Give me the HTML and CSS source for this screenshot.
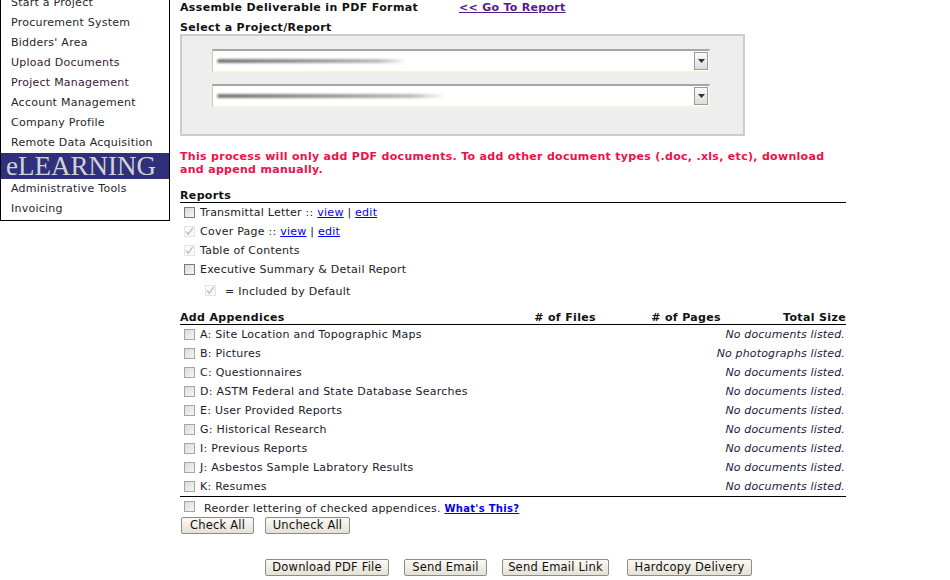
FILE: index.html
```html
<!DOCTYPE html>
<html>
<head>
<meta charset="utf-8">
<link rel="stylesheet" href="styles.css">
</head>
<body>
<div class="page">
  <nav class="sidebar">
    <a class="nav-item">Start a Project</a>
    <a class="nav-item">Procurement System</a>
    <a class="nav-item">Bidders' Area</a>
    <a class="nav-item visited">Upload Documents</a>
    <a class="nav-item visited">Project Management</a>
    <a class="nav-item">Account Management</a>
    <a class="nav-item">Company Profile</a>
    <a class="nav-item">Remote Data Acquisition</a>
    <div class="banner">eLEARNING</div>
    <a class="nav-item">Administrative Tools</a>
    <a class="nav-item">Invoicing</a>
  </nav>

  <main class="main">
    <div class="title-row">
      <div class="title">Assemble Deliverable in PDF Format</div>
      <a class="go-link">&lt;&lt; Go To Report</a>
    </div>
    <div class="label">Select a Project/Report</div>
    <div class="select-box">
      <div class="select"><span class="blur b1"></span><span class="arrow"><svg width="7" height="4" viewBox="0 0 7 4"><path d="M0 0H7L3.5 4Z" fill="#333"/></svg></span></div>
      <div class="select"><span class="blur b2"></span><span class="arrow"><svg width="7" height="4" viewBox="0 0 7 4"><path d="M0 0H7L3.5 4Z" fill="#333"/></svg></span></div>
    </div>

    <p class="warning">This process will only add PDF documents. To add other document types (.doc, .xls, etc), download and append manually.</p>

    <div class="section-head">Reports</div>
    <div class="row"><span class="cb"></span>Transmittal Letter ::&nbsp;<a class="lnk">view</a>&nbsp;|&nbsp;<a class="lnk">edit</a></div>
    <div class="row"><span class="cb checked"><svg width="11" height="11" viewBox="0 0 11 11"><path d="M1.5 5.5L4 9L9.5 1" fill="none" stroke="#bdbdb5" stroke-width="1.6"/></svg></span>Cover Page ::&nbsp;<a class="lnk">view</a>&nbsp;|&nbsp;<a class="lnk">edit</a></div>
    <div class="row"><span class="cb checked"><svg width="11" height="11" viewBox="0 0 11 11"><path d="M1.5 5.5L4 9L9.5 1" fill="none" stroke="#bdbdb5" stroke-width="1.6"/></svg></span>Table of Contents</div>
    <div class="row"><span class="cb"></span>Executive Summary &amp; Detail Report</div>
    <div class="row legend"><span class="cb checked"><svg width="11" height="11" viewBox="0 0 11 11"><path d="M1.5 5.5L4 9L9.5 1" fill="none" stroke="#bdbdb5" stroke-width="1.6"/></svg></span>= Included by Default</div>

    <div class="app-head">
      <div>Add Appendices</div>
      <div class="r"># of Files</div>
      <div class="r"># of Pages</div>
      <div class="r">Total Size</div>
    </div>
    <div class="apps">
      <div class="app"><div class="name"><span class="cb light"></span>A: Site Location and Topographic Maps</div><div class="status">No documents listed.</div></div>
      <div class="app"><div class="name"><span class="cb light"></span>B: Pictures</div><div class="status">No photographs listed.</div></div>
      <div class="app"><div class="name"><span class="cb light"></span>C: Questionnaires</div><div class="status">No documents listed.</div></div>
      <div class="app"><div class="name"><span class="cb light"></span>D: ASTM Federal and State Database Searches</div><div class="status">No documents listed.</div></div>
      <div class="app"><div class="name"><span class="cb light"></span>E: User Provided Reports</div><div class="status">No documents listed.</div></div>
      <div class="app"><div class="name"><span class="cb light"></span>G: Historical Research</div><div class="status">No documents listed.</div></div>
      <div class="app"><div class="name"><span class="cb light"></span>I: Previous Reports</div><div class="status">No documents listed.</div></div>
      <div class="app"><div class="name"><span class="cb light"></span>J: Asbestos Sample Labratory Results</div><div class="status">No documents listed.</div></div>
      <div class="app"><div class="name"><span class="cb light"></span>K: Resumes</div><div class="status">No documents listed.</div></div>
    </div>

    <div class="reorder"><span class="cb light"></span>Reorder lettering of checked appendices.&nbsp;<a class="whats">What's This?</a></div>
    <div class="btn-row">
      <button class="btn w-check">Check All</button>
      <button class="btn w-uncheck">Uncheck All</button>
    </div>

    <div class="actions">
      <button class="btn w-download">Download PDF File</button>
      <button class="btn w-email">Send Email</button>
      <button class="btn w-link">Send Email Link</button>
      <button class="btn w-hard">Hardcopy Delivery</button>
    </div>
  </main>
</div>
</body>
</html>
```

FILE: styles.css
```css
html, body {
  margin: 0;
  padding: 0;
  background: #ffffff;
}
body {
  font-family: "DejaVu Sans", Verdana, sans-serif;
  font-size: 11px;
  letter-spacing: 0.25px;
  color: #222222;
}
.page {
  display: flex;
  align-items: flex-start;
}
.sidebar {
  width: 170px;
  box-sizing: border-box;
  margin-top: -7px;
  border-left: 1px solid #000;
  border-right: 1px solid #000;
  border-bottom: 1px solid #000;
  display: flex;
  flex-direction: column;
  padding-bottom: 1px;
}
.nav-item {
  display: block;
  height: 20px;
  line-height: 20px;
  padding-left: 10px;
  color: #1f1f2a;
  text-decoration: none;
  white-space: nowrap;
}
.nav-item.visited {
  color: #3a1838;
}
.banner {
  height: 26px;
  background: #2f2f7c;
  color: #d2d2d2;
  font-family: "Liberation Serif", "Times New Roman", serif;
  font-size: 27px;
  line-height: 26px;
  padding-left: 5px;
  letter-spacing: 0;
  white-space: nowrap;
}
.main {
  margin-left: 10px;
  width: 666px;
  display: flex;
  flex-direction: column;
}
.title-row {
  display: flex;
  padding-top: 1px;
  height: 14px;
  line-height: 14px;
}
.title {
  width: 279px;
  font-weight: bold;
  letter-spacing: 0.35px;
  color: #111;
}
.go-link {
  font-weight: bold;
  letter-spacing: 0.3px;
  color: #551a8b;
  text-decoration: underline;
}
.label {
  font-weight: bold;
  letter-spacing: 0.35px;
  color: #111;
  margin-top: 6px;
  line-height: 13px;
}
.select-box {
  width: 565px;
  box-sizing: border-box;
  background: #eeeeee;
  border: 2px solid #cccccc;
  padding: 13px 0 26px 30px;
  display: flex;
  flex-direction: column;
  gap: 11px;
}
.select {
  width: 498px;
  height: 24px;
  box-sizing: border-box;
  background: #ffffff;
  border-top: 2px solid #a8a59c;
  border-left: 1px solid #cbc8bd;
  border-right: 1px solid #f3f1df;
  border-bottom: 2px solid #f5f3e2;
  display: flex;
  align-items: center;
  justify-content: space-between;
  padding: 0 0 0 2px;
}
.blur {
  display: block;
  height: 4px;
  background: linear-gradient(90deg, #777 0%, #999 50%, #bbb 85%, rgba(255,255,255,0) 100%);
  filter: blur(1.2px);
  border-radius: 2px;
  margin-left: 2px;
}
.b1 { width: 190px; }
.b2 { width: 228px; }
.arrow {
  width: 14px;
  height: 18px;
  box-sizing: border-box;
  border: 1px solid #9a9a9a;
  background: linear-gradient(#fafafa, #dcdcdc);
  display: flex;
  align-items: center;
  justify-content: center;
  margin-right: 1px;
  margin-top: -1px;
}
.warning {
  margin: 14px 0 0 0;
  font-weight: bold;
  letter-spacing: 0.3px;
  color: #ee1148;
  line-height: 13px;
  width: 648px;
}
.section-head {
  margin-top: 13px;
  font-weight: bold;
  letter-spacing: 0.35px;
  color: #111;
  line-height: 13px;
  border-bottom: 1px solid #000;
}
.row {
  height: 19px;
  display: flex;
  align-items: center;
  padding-left: 4px;
  white-space: nowrap;
}
.row.legend {
  padding-left: 25px;
  height: 21px;
  padding-top: 2px;
}
.row.legend .cb {
  margin-right: 9px;
  margin-top: -3px;
}
.cb {
  display: inline-flex;
  align-items: center;
  justify-content: center;
  width: 11px;
  height: 11px;
  box-sizing: border-box;
  border: 1px solid #7a7a7a;
  background: linear-gradient(135deg, #d8d8d8, #f8f8f8);
  margin-right: 5px;
  flex: none;
}
.cb.light {
  border: 1px solid #a6a6a6;
  background: linear-gradient(135deg, #dcdcdc, #f4f4f4);
}
.cb.checked {
  border: 1px solid #e6e6e0;
  background: #fafafa;
}
.cb svg {
  display: block;
}
.lnk {
  color: #0000ee;
  text-decoration: underline;
}
.app-head {
  margin-top: 9px;
  display: grid;
  grid-template-columns: 296px 120px 125px 125px;
  font-weight: bold;
  letter-spacing: 0.35px;
  color: #111;
  line-height: 13px;
  border-bottom: 1px solid #000;
}
.app-head .r {
  text-align: right;
}
.apps {
  border-bottom: 1px solid #000;
}
.app {
  height: 19px;
  display: flex;
  align-items: center;
  justify-content: space-between;
  white-space: nowrap;
}
.app .name {
  display: flex;
  align-items: center;
  padding-left: 4px;
  color: #20202e;
}
.status {
  font-style: italic;
  color: #1c1c40;
  padding-right: 1px;
  letter-spacing: 0.15px;
}
.reorder {
  display: flex;
  align-items: center;
  height: 17px;
  padding-left: 4px;
  padding-top: 3px;
  white-space: nowrap;
}
.reorder .cb {
  margin-right: 9px;
  margin-top: -5px;
}
.whats {
  font-size: 10px;
  font-weight: bold;
  letter-spacing: 0.3px;
  color: #0000ee;
  text-decoration: underline;
}
.btn-row {
  display: flex;
  gap: 11px;
  padding-left: 1px;
}
.btn {
  font-family: "DejaVu Sans", Verdana, sans-serif;
  font-size: 11.5px;
  letter-spacing: 0.2px;
  color: #111;
  height: 17px;
  line-height: 15px;
  padding: 0;
  text-align: center;
  border: 1px solid #8f8c86;
  border-radius: 2px;
  background: linear-gradient(#fbfaf6, #e4e0d6);
  box-sizing: border-box;
  margin: 0;
}
.w-check { width: 73px; }
.w-uncheck { width: 85px; }
.w-download { width: 124px; }
.w-email { width: 83px; }
.w-link { width: 107px; }
.w-hard { width: 125px; margin-left: 3px; }
.actions {
  margin-top: 25px;
  display: flex;
  justify-content: center;
  gap: 15px;
  padding-right: 9px;
}
```
